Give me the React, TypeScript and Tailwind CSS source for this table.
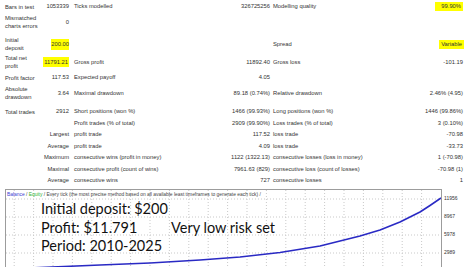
import type { ReactNode } from "react";

type RowProps = {
  h: string;
  c1?: ReactNode;
  c2?: ReactNode;
  c3?: ReactNode;
  c4?: ReactNode;
  c5?: ReactNode;
  c6?: ReactNode;
};

function Row({ h, c1, c2, c3, c4, c5, c6 }: RowProps) {
  return (
    <div className={`grid grid-cols-[36px_28px_125px_76px_123px_70px] items-center ${h}`}>
      <div className="leading-[8px]">{c1}</div>
      <div className="text-right whitespace-nowrap">{c2}</div>
      <div className="pl-[5px] whitespace-nowrap">{c3}</div>
      <div className="text-right whitespace-nowrap">{c4}</div>
      <div className="pl-[3px] whitespace-nowrap">{c5}</div>
      <div className="text-right whitespace-nowrap">{c6}</div>
    </div>
  );
}

// balance curve, local coords inside the plot frame
const curve = [
  [-1, 79.5], [34, 77.5], [94, 75], [144, 73], [194, 70], [234, 67], [274, 62.5],
  [314, 56], [354, 46], [374, 40], [394, 32], [414, 22], [424, 15.5], [435, 8],
];

const vLines = Array.from({ length: 22 }, (_, i) => 435 - 19.4 * (i + 1));
const hLines = [9, 27, 45, 63, 81];

export default function App() {
  return (
    <div className="w-[472px] h-[267px] overflow-hidden bg-white text-[#333] font-['Liberation_Sans',Arial,sans-serif]">
      <div className="pl-[5px] text-[5.8px]">
        <Row h="h-[13px]" c1="Bars in test" c2="1053339" c3="Ticks modelled" c4="326725256" c5="Modelling quality"
          c6={<span className="inline-block w-[28px] h-[9px] leading-[9px] bg-[#ffff00] pr-[2px]">99.90%</span>} />
        <Row h="h-[18px]" c1={<>Mismatched<br />charts errors</>} c2="0" />
        <div className="h-[4px]" />
        <Row h="h-[18px]" c1={<>Initial<br />deposit</>}
          c2={<span className="inline-block h-[11px] leading-[11px] bg-[#ffff00]">200.00</span>}
          c5="Spread"
          c6={<span className="inline-block h-[9px] leading-[9px] bg-[#ffff00] px-[2px] -mr-[1px]">Variable</span>} />
        <Row h="h-[18px]" c1={<>Total net<br />profit</>}
          c2={<span className="inline-block h-[10px] leading-[10px] bg-[#ffff00] px-[1px]">11791.21</span>}
          c3="Gross profit" c4="11892.40" c5="Gross loss" c6="-101.19" />
        <Row h="h-[13px]" c1="Profit factor" c2="117.53" c3="Expected payoff" c4="4.05" />
        <Row h="h-[18px]" c1={<>Absolute<br />drawdown</>} c2="3.64" c3="Maximal drawdown" c4="89.18 (0.74%)"
          c5="Relative drawdown" c6="2.46% (4.95)" />
        <div className="h-[4px]" />
        <Row h="h-[11.5px]" c1="Total trades" c2="2912" c3="Short positions (won %)" c4="1466 (99.93%)"
          c5="Long positions (won %)" c6="1446 (99.86%)" />
        <Row h="h-[11.5px]" c3="Profit trades (% of total)" c4="2909 (99.90%)" c5="Loss trades (% of total)" c6="3 (0.10%)" />
        <Row h="h-[11.5px]" c2="Largest" c3="profit trade" c4="117.52" c5="loss trade" c6="-70.98" />
        <Row h="h-[11.5px]" c2="Average" c3="profit trade" c4="4.09" c5="loss trade" c6="-33.73" />
        <Row h="h-[11.5px]" c2="Maximum" c3="consecutive wins (profit in money)" c4="1122 (1322.13)"
          c5="consecutive losses (loss in money)" c6="1 (-70.98)" />
        <Row h="h-[11.5px]" c2="Maximal" c3="consecutive profit (count of wins)" c4="7961.63 (829)"
          c5="consecutive loss (count of losses)" c6="-70.98 (1)" />
        <Row h="h-[11.5px]" c2="Average" c3="consecutive wins" c4="727" c5="consecutive losses" c6="1" />
      </div>

      <div className="flex mt-[2.5px] ml-[5px]">
        <div className="relative w-[437px] h-[90px] shrink-0 border border-[#9c9c9c]">
          <svg className="absolute inset-0" width="435" height="88">
            {vLines.map((x) => (
              <line key={x} x1={x} y1={0} x2={x} y2={88} stroke="#c9c9c9" strokeWidth="1" strokeDasharray="1 2" />
            ))}
            {hLines.map((y) => (
              <line key={y} x1={0} y1={y} x2={435} y2={y} stroke="#c9c9c9" strokeWidth="1" strokeDasharray="1 2" />
            ))}
            <polyline
              points={curve.map((p) => p.join(",")).join(" ")}
              fill="none"
              stroke="#2a2ac4"
              strokeWidth="1.6"
              strokeLinejoin="round"
            />
          </svg>
          <div className="relative pl-[1px] pt-[1px] text-[4.9px] leading-[7px] whitespace-nowrap text-[#444]">
            <span className="text-[#3a3ad0]">Balance</span> / <span className="text-[#2fb02f]">Equity</span> / Every tick
            (the most precise method based on all available least timeframes to generate each tick) /
          </div>
          <div className="relative pl-[35px] mt-[2px] text-[14.5px] leading-[18.5px] text-[#111] font-['Lato',sans-serif]">
            <div>Initial deposit: $200</div>
            <div className="flex">
              <span className="w-[130px]">Profit: $11.791</span>
              <span>Very low risk set</span>
            </div>
            <div>Period: 2010-2025</div>
          </div>
        </div>
        <div className="flex flex-col pt-[1px] pl-[2px] text-[5px] text-[#333]">
          {["11956", "8967", "5978", "2989"].map((v) => (
            <div key={v} className="h-[18px] flex items-center">{v}</div>
          ))}
        </div>
      </div>
    </div>
  );
}
